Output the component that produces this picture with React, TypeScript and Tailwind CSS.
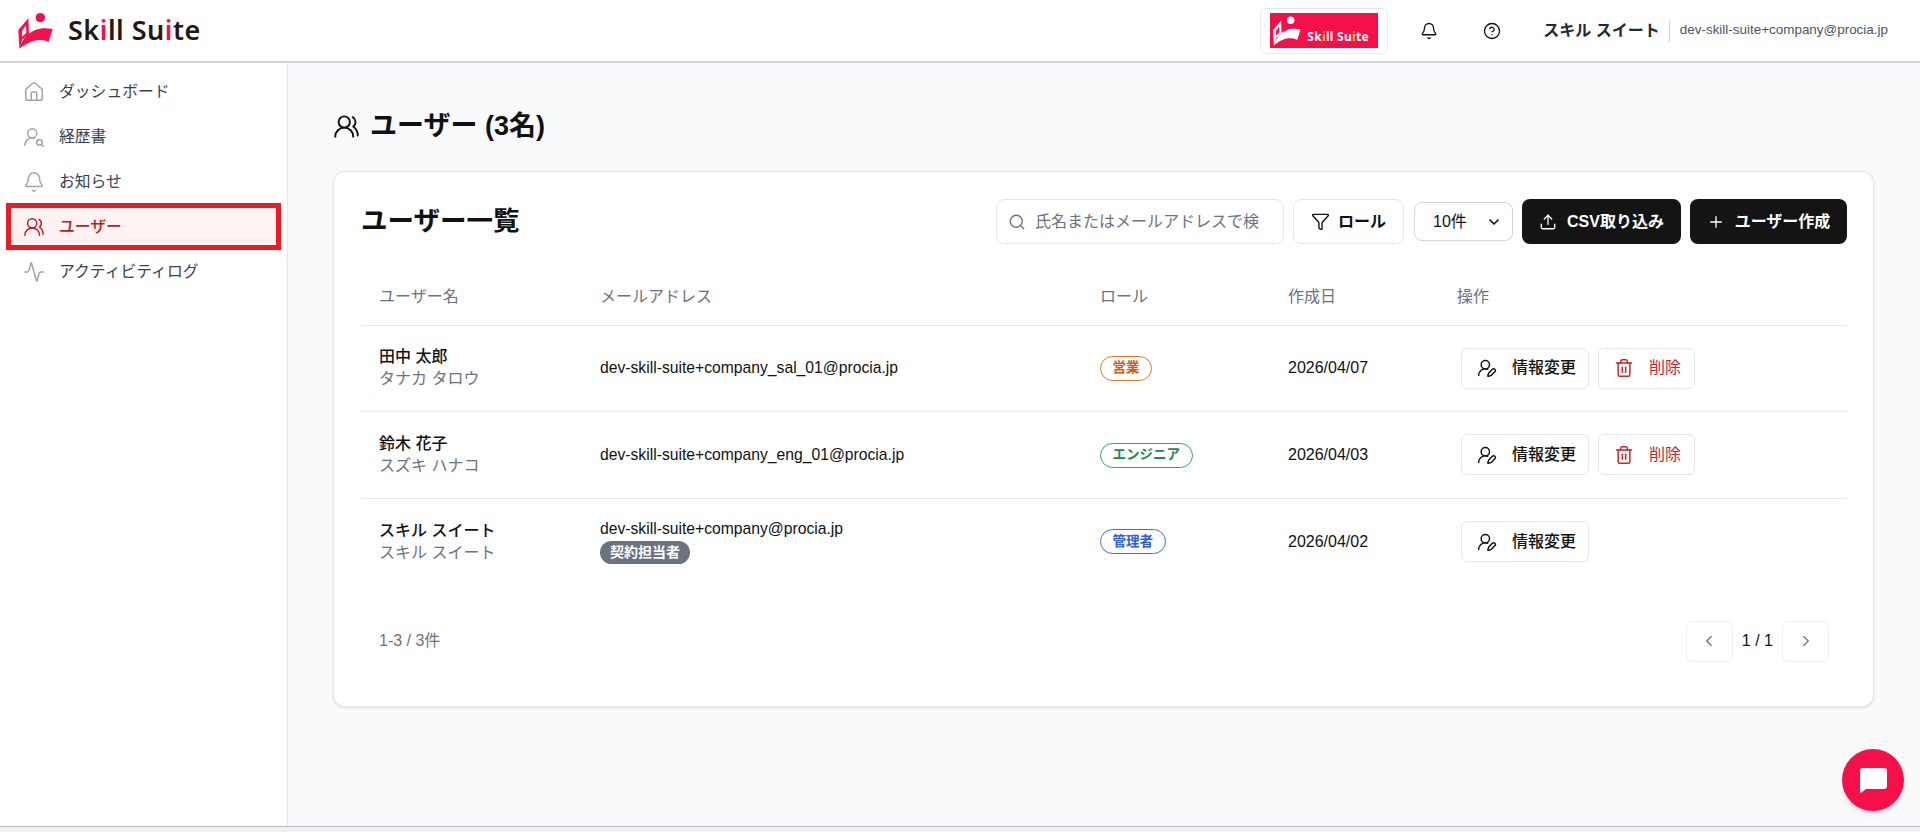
import {
  Activity,
  Bell,
  ChevronDown,
  ChevronLeft,
  ChevronRight,
  CircleHelp,
  Funnel,
  House,
  Plus,
  Search,
  Trash2,
  Upload,
  UserRoundPen,
  UserRoundSearch,
  UsersRound,
} from "lucide-react";

function LogoMark({ className, circle, body }: { className: string; circle: string; body: string }) {
  return (
    <svg viewBox="0 0 150 150" className={className}>
      <circle cx="85" cy="35" r="14" className={circle} />
      <path
        fillRule="evenodd"
        d="M19 72 L49 37 L51 85 L31 100 L22 128 Z M30 75 L42 58 L43 80 L30 92 Z"
        className={body}
      />
      <path d="M22 128 C30 98 50 80 70 72 C85 66 100 65 122 69 L110 108 C90 98 60 98 22 128 Z" className={body} />
    </svg>
  );
}

const navItems = [
  { label: "ダッシュボード", icon: House },
  { label: "経歴書", icon: UserRoundSearch },
  { label: "お知らせ", icon: Bell },
  { label: "ユーザー", icon: UsersRound, active: true },
  { label: "アクティビティログ", icon: Activity },
];

const users = [
  {
    name: "田中 太郎",
    kana: "タナカ タロウ",
    email: "dev-skill-suite+company_sal_01@procia.jp",
    role: "営業",
    roleClass: "border-[#e07b2e] text-[#c8601a]",
    date: "2026/04/07",
    canDelete: true,
  },
  {
    name: "鈴木 花子",
    kana: "スズキ ハナコ",
    email: "dev-skill-suite+company_eng_01@procia.jp",
    role: "エンジニア",
    roleClass: "border-[#2ea565] text-[#1f8a4d]",
    date: "2026/04/03",
    canDelete: true,
  },
  {
    name: "スキル スイート",
    kana: "スキル スイート",
    email: "dev-skill-suite+company@procia.jp",
    role: "管理者",
    roleClass: "border-[#3f6fd1] text-[#2f62d6]",
    date: "2026/04/02",
    owner: true,
  },
];

export default function App() {
  return (
    <div className="h-[832px] overflow-hidden bg-[#f1f2f3] font-['Liberation_Sans','Noto_Sans_CJK_JP',sans-serif] text-[#111]">
      <div className="flex h-[827px] flex-col border-b border-[#b9bcc0] bg-[#f9fafb]">
        {/* header */}
        <header className="flex h-[63px] flex-none items-center border-b-2 border-[#d1d5db] bg-white pl-[12px] pr-[32px]">
          <LogoMark className="h-[50px] w-[50px]" circle="fill-[#f5104a]" body="fill-[#f5104a]" />
          <span className="ml-[6px] font-['Noto_Sans',sans-serif] text-[27px] font-semibold tracking-[0.5px] text-[#231815]">
            Sk<span className="text-[#f5104a]">i</span>ll Su<span className="text-[#f5104a]">i</span>te
          </span>
          <div className="ml-auto flex h-[46px] w-[128px] items-center justify-center rounded-[6px] border border-[#e8eaed]">
            <div className="flex h-[35px] w-[108px] items-center overflow-hidden bg-[#f5104a]">
              <LogoMark className="-ml-[2px] h-[40px] w-[40px] flex-none" circle="fill-white" body="fill-white" />
              <span className="-ml-[1px] mt-[13px] font-['Noto_Sans',sans-serif] text-[12px] font-bold tracking-[0.3px] text-white">
                Sk<span className="text-[#ffc23d]">i</span>ll Su<span className="text-[#ffc23d]">i</span>te
              </span>
            </div>
          </div>
          <Bell className="ml-[32px] h-[18px] w-[18px]" strokeWidth={1.75} />
          <CircleHelp className="ml-[45px] h-[18px] w-[18px]" strokeWidth={1.75} />
          <span className="ml-[42px] text-[16px] font-bold text-[#1f2937]">スキル スイート</span>
          <span className="ml-[9px] h-[22px] w-px bg-[#d1d5db]" />
          <span className="ml-[10px] text-[13.45px] text-[#4b5563]">dev-skill-suite+company@procia.jp</span>
        </header>

        <div className="flex min-h-0 flex-1">
          {/* sidebar */}
          <aside className="w-[288px] flex-none border-r border-[#e5e7eb] bg-white px-[7px] pt-[8px]">
            <nav className="flex flex-col gap-[4px]">
              {navItems.map((item) => (
                <a
                  key={item.label}
                  className={`relative flex h-[41px] items-center gap-[14px] pl-[16px] text-[15.8px] ${
                    item.active ? "bg-[#fef2f2] font-medium text-[#b91c1c]" : "text-[#374151]"
                  }`}
                >
                  <item.icon
                    className={`h-[22px] w-[22px] flex-none ${item.active ? "text-[#b91c1c]" : "text-[#9ca3af]"}`}
                    strokeWidth={1.6}
                  />
                  {item.label}
                  {item.active && <span className="absolute -inset-x-px -inset-y-[3px] border-[5px] border-[#ed1c24]" />}
                </a>
              ))}
            </nav>
          </aside>

          {/* main */}
          <main className="flex-1 pl-[45px] pr-[46px] pt-[45px]">
            <h1 className="flex h-[36px] items-center gap-[10px] text-[27px] font-bold">
              <UsersRound className="h-[27px] w-[27px]" strokeWidth={1.75} />
              ユーザー (3名)
            </h1>

            <section className="mt-[27px] rounded-[12px] border border-[#e5e7eb] bg-white pb-[44px] pl-[27px] pr-[26px] pt-[27px] shadow-sm">
              <div className="flex h-[45px] items-center">
                <h2 className="text-[26.5px] font-bold">ユーザー一覧</h2>
                <div className="ml-auto flex items-center">
                  <div className="flex h-[45px] w-[288px] items-center gap-[9px] rounded-[8px] border border-[#e5e7eb] pl-[11px] text-[16px] text-[#6b7280]">
                    <Search className="h-[18px] w-[18px] flex-none" strokeWidth={1.75} />
                    <span className="truncate">氏名またはメールアドレスで検</span>
                  </div>
                  <button className="ml-[9px] flex h-[45px] w-[111px] items-center justify-center gap-[8px] rounded-[8px] border border-[#e5e7eb] text-[16px] font-bold">
                    <Funnel className="h-[19px] w-[19px]" strokeWidth={1.75} />
                    ロール
                  </button>
                  <div className="ml-[10px] flex h-[39px] w-[99px] items-center justify-between rounded-[8px] border border-[#d1d5db] pl-[18px] pr-[10px] text-[16px]">
                    10件
                    <ChevronDown className="h-[16px] w-[16px]" strokeWidth={2.5} />
                  </div>
                  <button className="ml-[9px] flex h-[45px] w-[159px] items-center justify-center gap-[10px] rounded-[8px] bg-[#141414] text-[16px] font-bold text-white">
                    <Upload className="h-[18px] w-[18px]" strokeWidth={1.75} />
                    CSV取り込み
                  </button>
                  <button className="ml-[9px] flex h-[45px] w-[157px] items-center justify-center gap-[10px] rounded-[8px] bg-[#141414] text-[16px] font-bold text-white">
                    <Plus className="h-[18px] w-[18px]" strokeWidth={1.75} />
                    ユーザー作成
                  </button>
                </div>
              </div>

              <table className="mt-[24px] w-full table-fixed border-collapse text-left text-[16px]">
                <colgroup>
                  <col className="w-[220px]" />
                  <col className="w-[500px]" />
                  <col className="w-[188px]" />
                  <col className="w-[169px]" />
                  <col />
                </colgroup>
                <thead>
                  <tr className="h-[57px] border-b border-[#e5e7eb] text-[#6b7280]">
                    <th className="pl-[18px] pt-[2px] font-normal">ユーザー名</th>
                    <th className="pl-[19px] pt-[2px] font-normal">メールアドレス</th>
                    <th className="pl-[19px] pt-[2px] font-normal">ロール</th>
                    <th className="pl-[19px] pt-[2px] font-normal">作成日</th>
                    <th className="pl-[19px] pt-[2px] font-normal">操作</th>
                  </tr>
                </thead>
                <tbody>
                  {users.map((user, i) => (
                    <tr key={user.email} className={`h-[86.5px] ${i < users.length - 1 ? "border-b border-[#e5e7eb]" : ""}`}>
                      <td className="pl-[18px]">
                        <div className="font-medium leading-[22px]">{user.name}</div>
                        <div className="leading-[22px] text-[#6b7280]">{user.kana}</div>
                      </td>
                      <td className="pl-[19px]">
                        <div className="text-[15.7px] leading-[22px]">{user.email}</div>
                        {user.owner && (
                          <span className="mb-[2px] inline-flex h-[23px] items-center rounded-full bg-[#6b7280] px-[10px] text-[14px] font-bold text-white">
                            契約担当者
                          </span>
                        )}
                      </td>
                      <td className="pl-[19px]">
                        <span
                          className={`inline-flex h-[25px] items-center rounded-full border bg-white px-[11.5px] text-[13.5px] font-bold ${user.roleClass}`}
                        >
                          {user.role}
                        </span>
                      </td>
                      <td className="pl-[19px]">{user.date}</td>
                      <td className="pl-[23px]">
                        <div className="flex items-center gap-[9px]">
                          <button className="flex h-[41px] w-[128px] items-center gap-[15px] rounded-[6px] border border-[#e5e7eb] pl-[15px] font-medium">
                            <UserRoundPen className="h-[20px] w-[20px] flex-none" strokeWidth={1.75} />
                            情報変更
                          </button>
                          {user.canDelete && (
                            <button className="flex h-[41px] w-[97px] items-center gap-[15px] rounded-[6px] border border-[#e5e7eb] pl-[15px] text-[#c4242b]">
                              <Trash2 className="h-[20px] w-[20px] flex-none" strokeWidth={1.75} />
                              削除
                            </button>
                          )}
                        </div>
                      </td>
                    </tr>
                  ))}
                </tbody>
              </table>

              <div className="mt-[36px] flex items-center justify-between pl-[18px] pr-[18px]">
                <span className="text-[16px] text-[#6b7280]">1-3 / 3件</span>
                <div className="flex items-center gap-[9px] text-[16px]">
                  <button className="flex h-[41px] w-[47px] items-center justify-center rounded-[6px] border border-[#f0f1f3] text-[#6b7280]">
                    <ChevronLeft className="h-[18px] w-[18px]" strokeWidth={1.75} />
                  </button>
                  1 / 1
                  <button className="flex h-[41px] w-[47px] items-center justify-center rounded-[6px] border border-[#f0f1f3] text-[#6b7280]">
                    <ChevronRight className="h-[18px] w-[18px]" strokeWidth={1.75} />
                  </button>
                </div>
              </div>
            </section>
          </main>
        </div>
      </div>

      {/* chat */}
      <button className="fixed left-[1842px] top-[749px] flex h-[62px] w-[62px] items-center justify-center rounded-full bg-[#f5104a] shadow-md">
        <svg viewBox="0 0 27 25" className="h-[25px] w-[27px] fill-white">
          <path d="M3 0 H24 a3 3 0 0 1 3 3 V18 a3 3 0 0 1 -3 3 H6 L1.5 24.5 Q0 25 0 23.5 V3 a3 3 0 0 1 3 -3 Z" />
        </svg>
      </button>
    </div>
  );
}
